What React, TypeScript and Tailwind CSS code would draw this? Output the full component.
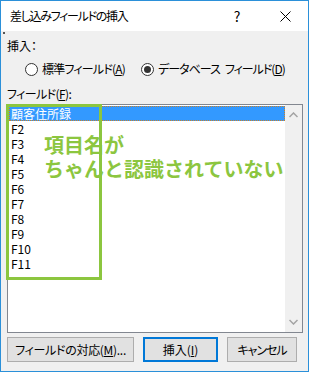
import React from "react";

const font = { fontFamily: '"Noto Sans CJK JP", "Noto Sans", sans-serif' };

const items = ["F2", "F3", "F4", "F5", "F6", "F7", "F8", "F9", "F10", "F11"];

function Radio({ checked }: { checked?: boolean }) {
  return (
    <span className="shrink-0 w-[13px] h-[13px] rounded-full border border-[#333333] bg-white flex items-center justify-center">
      {checked && <span className="w-[7px] h-[7px] rounded-full bg-[#333333]" />}
    </span>
  );
}

export default function App() {
  return (
    <div
      className="w-[309px] h-[372px] border border-[#2b90d9] flex flex-col text-[12px] text-[#000000] overflow-hidden [font-feature-settings:'palt']"
      style={font}
    >
      {/* Title bar */}
      <div className="h-[30px] bg-white flex items-center pl-[9px] shrink-0">
        <span className="flex-1 leading-[16px] tracking-[-1.3px]">差し込みフィールドの挿入</span>
        <span className="w-[46px] text-center text-[14px] leading-[16px] mr-[2px]">?</span>
        <span className="w-[46px] flex justify-center">
          <svg width="11" height="11" viewBox="0 0 11 11">
            <path d="M0.5 0.5 L10.5 10.5 M10.5 0.5 L0.5 10.5" stroke="#000" strokeWidth="1" />
          </svg>
        </span>
      </div>

      {/* Body */}
      <div className="relative flex-1 bg-[#f0f0f0] px-[6px] flex flex-col">
        <span className="absolute left-[2px] top-[1px] w-[2px] h-[2px] bg-[#555]" />
        <div className="mt-[7px] h-[16px] leading-[16px]">挿入：</div>

        <div className="mt-[7px] h-[16px] flex items-center leading-[16px] pl-[18px] whitespace-nowrap">
          <Radio />
          <span className="ml-[4px] tracking-[-0.8px]">
            標準フィールド(<span className="underline">A</span>)
          </span>
          <span className="ml-[16px]">
            <Radio checked />
          </span>
          <span className="ml-[4px] tracking-[-1px]">データベース</span>
          <span className="ml-[5px] tracking-[-1px]">
            フィールド(<span className="underline">D</span>)
          </span>
        </div>

        <div className="mt-[9px] h-[16px] leading-[16px] tracking-[-0.6px]">
          フィールド(<span className="underline">F</span>):
        </div>

        {/* List box */}
        <div className="relative mt-[2px] h-[229px] w-[296px] border border-[#828790] bg-white flex">
          <div className="flex-1 pt-[1px] pl-[1px]">
            <div className="h-[15px] leading-[15px] bg-[#3399ff] text-white pl-[2px] outline-1 outline-dotted outline-[#c8802a] -outline-offset-1">
              顧客住所録
            </div>
            {items.map((f) => (
              <div key={f} className="h-[15px] leading-[15px] pl-[2px]">
                {f}
              </div>
            ))}
          </div>
          <div className="w-[17px] bg-[#f0f0f0] flex flex-col justify-between items-center py-[7px]">
            <svg width="9" height="6" viewBox="0 0 9 6">
              <path d="M0.5 5 L4.5 1 L8.5 5" stroke="#a3a3a3" strokeWidth="1.5" fill="none" />
            </svg>
            <svg width="9" height="6" viewBox="0 0 9 6">
              <path d="M0.5 1 L4.5 5 L8.5 1" stroke="#a3a3a3" strokeWidth="1.5" fill="none" />
            </svg>
          </div>

          {/* Annotation */}
          <div className="absolute left-[-2px] top-[-1px] w-[96px] h-[176px] border-[3px] border-[#8cc63f]" />
          <div className="absolute left-[36px] top-[28px] text-[#8cc63f] font-bold text-[20px] leading-[24px] whitespace-nowrap [font-feature-settings:normal]">
            項目名が
            <br />
            ちゃんと認識されていない
          </div>
        </div>

        {/* Buttons */}
        <div className="mt-[4px] h-[25px] flex">
          <div className="w-[127px] h-[25px] bg-[#e1e1e1] border border-[#adadad] flex items-center justify-center leading-[16px] tracking-[-0.3px]">
            フィールドの対応(<span className="underline">M</span>)...
          </div>
          <div className="ml-[9px] w-[75px] h-[25px] bg-[#e1e1e1] border-2 border-[#0078d7] flex items-center justify-center leading-[16px]">
            挿入(<span className="underline">I</span>)
          </div>
          <div className="ml-[9px] w-[70px] h-[25px] bg-[#e1e1e1] border border-[#adadad] flex items-center justify-center leading-[16px] tracking-[-1px]">
            キャンセル
          </div>
        </div>
      </div>
    </div>
  );
}
